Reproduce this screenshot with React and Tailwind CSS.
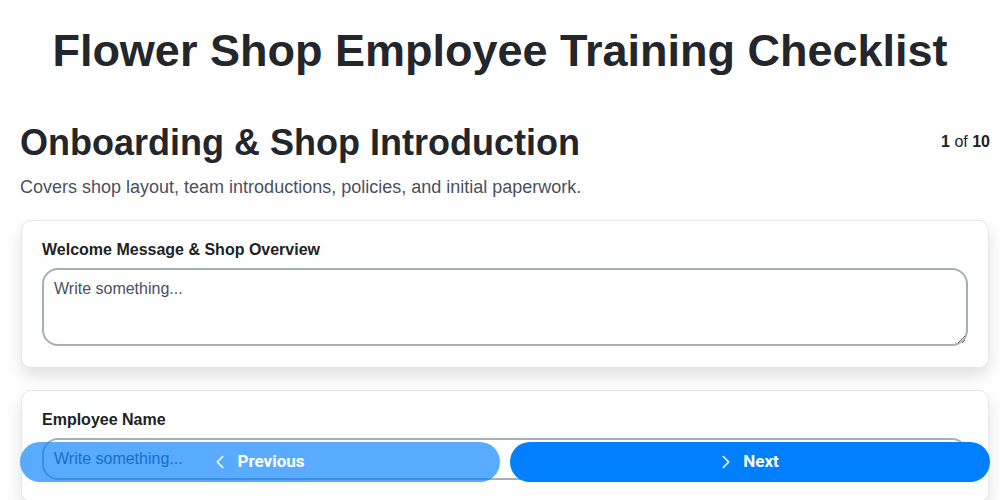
import React from 'react';
import { ChevronLeft, ChevronRight } from 'lucide-react';

const fields = [
  { label: 'Welcome Message & Shop Overview', multiline: true },
  { label: 'Employee Name', multiline: false },
];

function Field({ label, multiline }) {
  return (
    <div className="mx-px bg-white border border-gray-200 rounded-[10px] shadow-[0_8px_16px_rgba(0,0,0,0.12)] px-5 pt-[19px] pb-[21px] mb-[22px]">
      <label className="block text-base font-bold text-[#222] leading-5 mb-[8px]">{label}</label>
      {multiline ? (
        <textarea
          placeholder="Write something..."
          className="block w-full h-[78px] border-2 border-[#a7aeb6] rounded-2xl px-[10px] pt-[7px] pb-[6px] text-base text-[#333] placeholder:text-[#4b5060] outline-none"
        />
      ) : (
        <input
          placeholder="Write something..."
          className="block w-full h-[42px] border-2 border-[#a7aeb6] rounded-2xl px-[10px] text-base text-[#333] placeholder:text-[#4b5060] outline-none"
        />
      )}
    </div>
  );
}

export default function App() {
  return (
    <div className="min-h-screen bg-white font-['Liberation_Sans',Arial,sans-serif] text-[#222] pl-5 pr-[10px]">
      <h1 className="-ml-[10px] text-[45px] font-bold text-center leading-none pt-[28px] pb-[47px] text-[#23262b]">
        Flower Shop Employee Training Checklist
      </h1>

      <div className="flex items-start justify-between">
        <h2 className="text-[36px] font-bold leading-tight text-[#23262b]">Onboarding &amp; Shop Introduction</h2>
        <div className="text-base pt-[10px]">
          <span className="font-bold">1</span> of <span className="font-bold">10</span>
        </div>
      </div>
      <p className="text-lg text-[#4b5060] mt-[8px] mb-[19px]">
        Covers shop layout, team introductions, policies, and initial paperwork.
      </p>

      {fields.map((f) => (
        <Field key={f.label} {...f} />
      ))}

      {/* pager pinned to the bottom of the viewport */}
      <div className="fixed left-5 right-[10px] bottom-[18px] flex gap-[10px] font-['Roboto',sans-serif]">
        <button className="flex-1 h-10 rounded-full bg-[#007fff] opacity-65 text-white font-bold text-[17px] flex items-center justify-center gap-[6px] pr-[6px]">
          <ChevronLeft size={22} strokeWidth={1.75} />
          Previous
        </button>
        <button className="flex-1 h-10 rounded-full bg-[#007fff] text-white font-bold text-[17px] flex items-center justify-center gap-[6px] pr-[6px]">
          <ChevronRight size={22} strokeWidth={1.75} />
          Next
        </button>
      </div>
    </div>
  );
}
